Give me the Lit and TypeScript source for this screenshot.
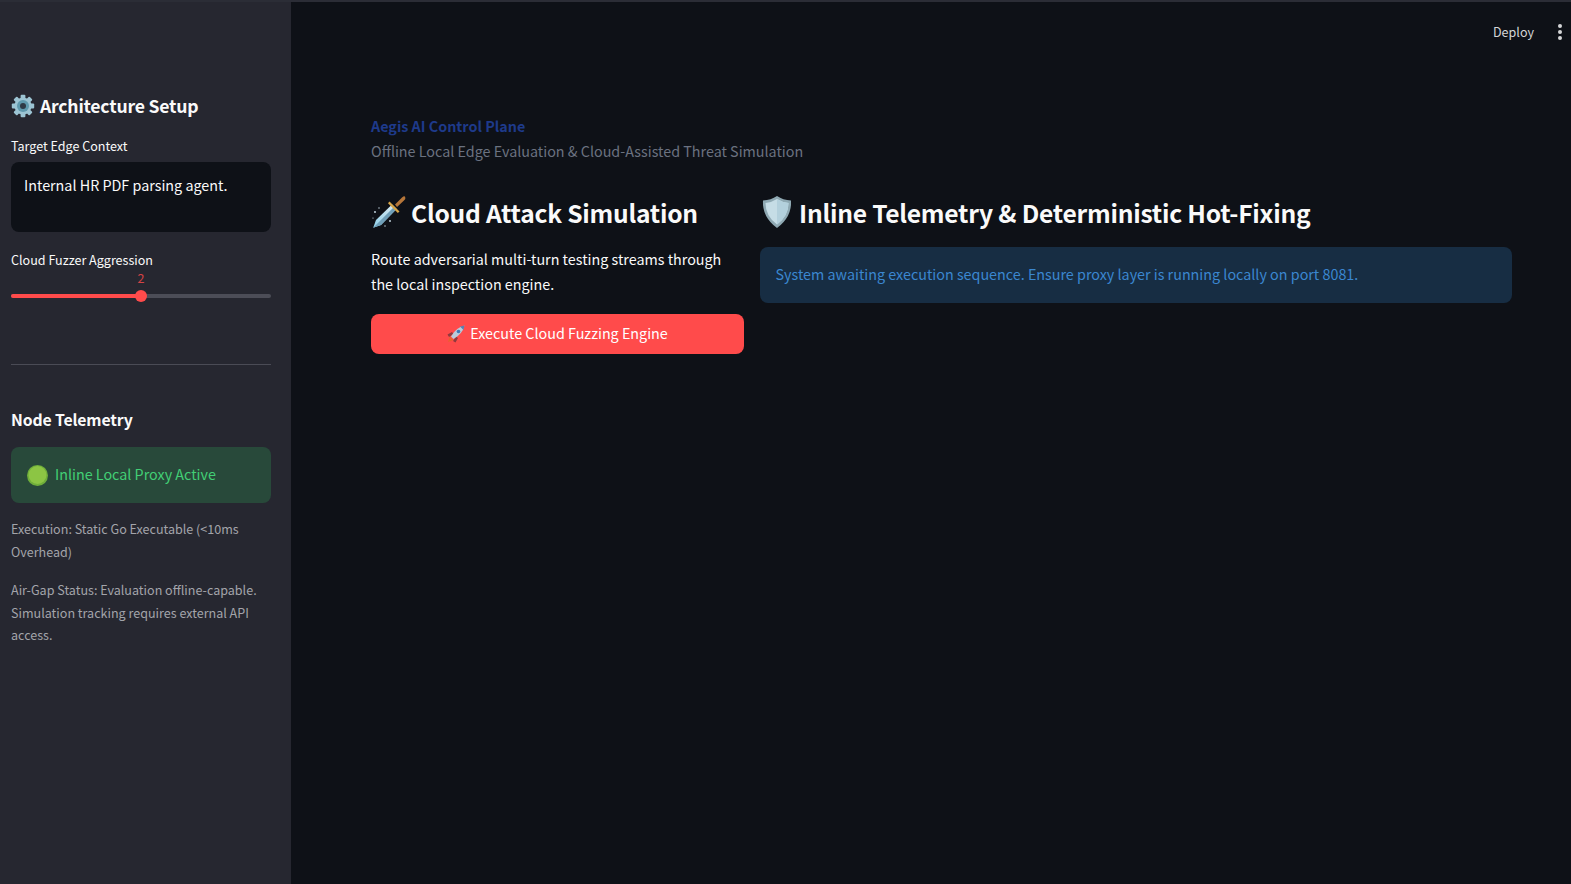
import { LitElement, html, css, svg } from "lit";
import { customElement } from "lit/decorators.js";

const gear = svg`<svg class="ico" viewBox="0 0 24 24" width="24" height="24"><g fill="#9cc4d3"><circle cx="12" cy="12" r="8.6"/><rect x="9.6" y="0.8" width="4.8" height="5" rx="1"/><rect x="9.6" y="18.2" width="4.8" height="5" rx="1"/><rect x="9.6" y="0.8" width="4.8" height="5" rx="1" transform="rotate(45 12 12)"/><rect x="9.6" y="18.2" width="4.8" height="5" rx="1" transform="rotate(45 12 12)"/><rect x="9.6" y="0.8" width="4.8" height="5" rx="1" transform="rotate(90 12 12)"/><rect x="9.6" y="18.2" width="4.8" height="5" rx="1" transform="rotate(90 12 12)"/><rect x="9.6" y="0.8" width="4.8" height="5" rx="1" transform="rotate(135 12 12)"/><rect x="9.6" y="18.2" width="4.8" height="5" rx="1" transform="rotate(135 12 12)"/></g><circle cx="12" cy="12" r="6" fill="#5f99ad"/><circle cx="12" cy="12" r="3" fill="#2f3a46"/></svg>`;

const dagger = svg`<svg class="ico" viewBox="0 0 36 36" width="36" height="36"><defs><linearGradient id="bl" x1="0" y1="1" x2="1" y2="0"><stop offset="0" stop-color="#8fd0ea"/><stop offset="1" stop-color="#dfeef5"/></linearGradient></defs><path d="M2.2 33.8 L5 26 L21 10.5 L25.5 15 L10 31 Z" fill="url(#bl)"/><path d="M2.2 33.8 L23.2 12.8 L25.5 15 L10 31 Z" fill="#6f9fb8"/><path d="M18.5 7.5 L28.5 17.5 L26.8 19 L17 9.2 Z" fill="#d8a648"/><path d="M24 10.5 L31 3.5 Q33.5 1.5 34.2 3 Q35 5 33 6.5 L26 13 Z" fill="#b5763a"/><g fill="#cfe3ee"><circle cx="4" cy="18" r=".9"/><circle cx="8" cy="14" r=".7"/><circle cx="19" cy="27" r=".9"/><circle cx="14" cy="32" r=".7"/><circle cx="2" cy="24" r=".6"/></g></svg>`;

const shield = svg`<svg class="ico" viewBox="0 0 30 34" width="30" height="34"><path d="M15 1 Q21 5 29 5.5 Q30 22 15 33 Q0 22 1 5.5 Q9 5 15 1Z" fill="#8fa9b3"/><path d="M15 4 Q20.5 7.5 26.5 8 Q26.5 21 15 29.5 Q3.5 21 3.5 8 Q9.5 7.5 15 4Z" fill="#c6dde6"/><path d="M15 4 Q20.5 7.5 26.5 8 Q26.5 21 15 29.5Z" fill="#b3d0dc"/></svg>`;

const rocket = svg`<svg class="ico" viewBox="0 0 18 18" width="18" height="18"><path d="M1 17 L3 11.5 L6.5 15Z" fill="#e8622c"/><path d="M2 12 L0.5 9.5 L5 7 L6.5 9Z M6 16 L8.5 17.5 L11 13 L9 11.5Z" fill="#8f3a3f"/><path d="M4 11.5 Q9 2.5 17.5 0.5 Q15.5 9 6.5 14Z" fill="#b9cada"/><path d="M13 1.5 Q15.5 1 17.5 0.5 Q17 2.5 16.5 5Z" fill="#5a7fb0"/><circle cx="11.5" cy="6.5" r="1.8" fill="#3f78b5"/></svg>`;

const greenDot = svg`<svg class="ico" viewBox="0 0 20 20" width="21" height="21"><circle cx="10" cy="10" r="10" fill="#6fae3a"/><circle cx="10" cy="9.5" r="8.5" fill="#8cc544"/></svg>`;

@customElement("app-root")
export class AppRoot extends LitElement {
  static styles = css`
    :host {
      display: block;
      height: 884px;
      overflow: hidden;
      background: #0e1117;
      color: #fafafa;
      font-family: "Noto Sans CJK SC", "Noto Sans", sans-serif;
      font-size: 14.33px;
    }
    .strip { height: 2px; background: #2b2d36; }
    .page { display: flex; height: 882px; }
    .ico { flex: none; display: block; }

    .side {
      box-sizing: border-box;
      width: 291px;
      flex: none;
      background: #262730;
      padding: 90px 20px 0 11px;
    }
    .side h2 {
      margin: 0;
      display: flex;
      align-items: center;
      gap: 5px;
      font-size: 17.6px;
      letter-spacing: -0.22px;
      line-height: 28px;
      font-weight: 700;
    }
    .label { font-size: 12.55px; line-height: 20px; color: #fafafa; }
    .l1 { margin-top: 16px; }
    .area {
      margin-top: 6px;
      box-sizing: border-box;
      height: 70px;
      padding: 12px 13px;
      border-radius: 8px;
      background: #0e1117;
      line-height: 22px;
    }
    .l2 { margin-top: 18px; }
    .slider { position: relative; height: 32px; }
    .val {
      position: absolute;
      top: 0;
      transform: translateX(-50%);
      font-size: 12.55px;
      line-height: 16px;
      color: #ff4b4b;
      opacity: .8;
    }
    .track {
      position: absolute;
      left: 0;
      right: 0;
      top: 24px;
      height: 4px;
      border-radius: 2px;
      background: #4c4d57;
    }
    .fill { height: 4px; border-radius: 2px; background: #ff4b4b; }
    .thumb {
      position: absolute;
      top: 20px;
      width: 12px;
      height: 12px;
      margin-left: -6px;
      border-radius: 50%;
      background: #ff4b4b;
    }
    .rule { margin: 62px 0 0; border: 0; height: 1px; background: #4a4b55; }
    .side h3 {
      margin: 43px 0 0;
      font-size: 15.8px;
      letter-spacing: -0.14px;
      line-height: 24px;
      font-weight: 700;
    }
    .ok {
      margin-top: 15px;
      box-sizing: border-box;
      height: 56px;
      padding: 0 16px;
      display: flex;
      align-items: center;
      gap: 7px;
      border-radius: 8px;
      background: #28493a;
      color: #42cf75;
      line-height: 22px;
    }
    .ok span, .go span { margin-top: -2px; }
    .cap {
      margin: 15px 0 0;
      font-size: 12.55px;
      line-height: 22.5px;
      color: #a3a4aa;
    }
    .cap + .cap { margin-top: 16px; }

    .main { flex: 1; min-width: 0; position: relative; padding: 112px 59px 0 80px; }
    .top {
      position: absolute;
      top: 18px;
      right: 9px;
      display: flex;
      align-items: center;
      gap: 24px;
      font-size: 12.55px;
      line-height: 24px;
      color: #d5d6d8;
    }
    .dots { display: flex; flex-direction: column; gap: 2px; }
    .dots i { display: block; width: 4px; height: 4px; border-radius: 50%; background: #d5d6d8; }
    .brand { font-weight: 700; line-height: 24px; color: #1e3a8a; }
    .sub { line-height: 26px; color: #6b7280; }
    .cols {
      margin-top: 28px;
      display: grid;
      grid-template-columns: 373px 752px;
      column-gap: 16px;
      align-items: start;
    }
    h1 {
      margin: 0;
      display: flex;
      align-items: center;
      gap: 4px;
      height: 40px;
      font-size: 24.6px;
      letter-spacing: -0.23px;
      line-height: 40px;
      font-weight: 700;
    }
    .c2 h1 { gap: 7px; padding-left: 2px; }
    .lead { margin: 14px 0 0; line-height: 25px; color: #fafafa; }
    .go {
      margin-top: 18px;
      height: 40px;
      display: flex;
      align-items: center;
      justify-content: center;
      gap: 5px;
      border-radius: 8px;
      background: #ff4b4b;
      color: #fff;
      line-height: 24px;
    }
    .info {
      margin-top: 15px;
      box-sizing: border-box;
      height: 56px;
      padding: 0 15.5px 3px;
      display: flex;
      align-items: center;
      border-radius: 8px;
      background: #172d43;
      color: #3b87d0;
    }
  `;

  render() {
    const pct = 50;
    return html`
      <div class="strip"></div>
      <div class="page">
        <aside class="side">
          <h2>${gear}<span>Architecture Setup</span></h2>
          <div class="label l1">Target Edge Context</div>
          <div class="area">Internal HR PDF parsing agent.</div>
          <div class="label l2">Cloud Fuzzer Aggression</div>
          <div class="slider">
            <span class="val" style="left:${pct}%">2</span>
            <div class="track"><div class="fill" style="width:${pct}%"></div></div>
            <div class="thumb" style="left:${pct}%"></div>
          </div>
          <hr class="rule" />
          <h3>Node Telemetry</h3>
          <div class="ok">${greenDot}<span>Inline Local Proxy Active</span></div>
          <p class="cap">Execution: Static Go Executable (&lt;10ms Overhead)</p>
          <p class="cap">Air-Gap Status: Evaluation offline-capable. Simulation tracking requires external API access.</p>
        </aside>
        <main class="main">
          <div class="top">
            <span>Deploy</span>
            <span class="dots"><i></i><i></i><i></i></span>
          </div>
          <div class="brand">Aegis AI Control Plane</div>
          <div class="sub">Offline Local Edge Evaluation &amp; Cloud-Assisted Threat Simulation</div>
          <div class="cols">
            <section>
              <h1>${dagger}<span>Cloud Attack Simulation</span></h1>
              <p class="lead">Route adversarial multi-turn testing streams through the local inspection engine.</p>
              <div class="go">${rocket}<span>Execute Cloud Fuzzing Engine</span></div>
            </section>
            <section class="c2">
              <h1>${shield}<span>Inline Telemetry &amp; Deterministic Hot-Fixing</span></h1>
              <div class="info">System awaiting execution sequence. Ensure proxy layer is running locally on port 8081.</div>
            </section>
          </div>
        </main>
      </div>
    `;
  }
}
